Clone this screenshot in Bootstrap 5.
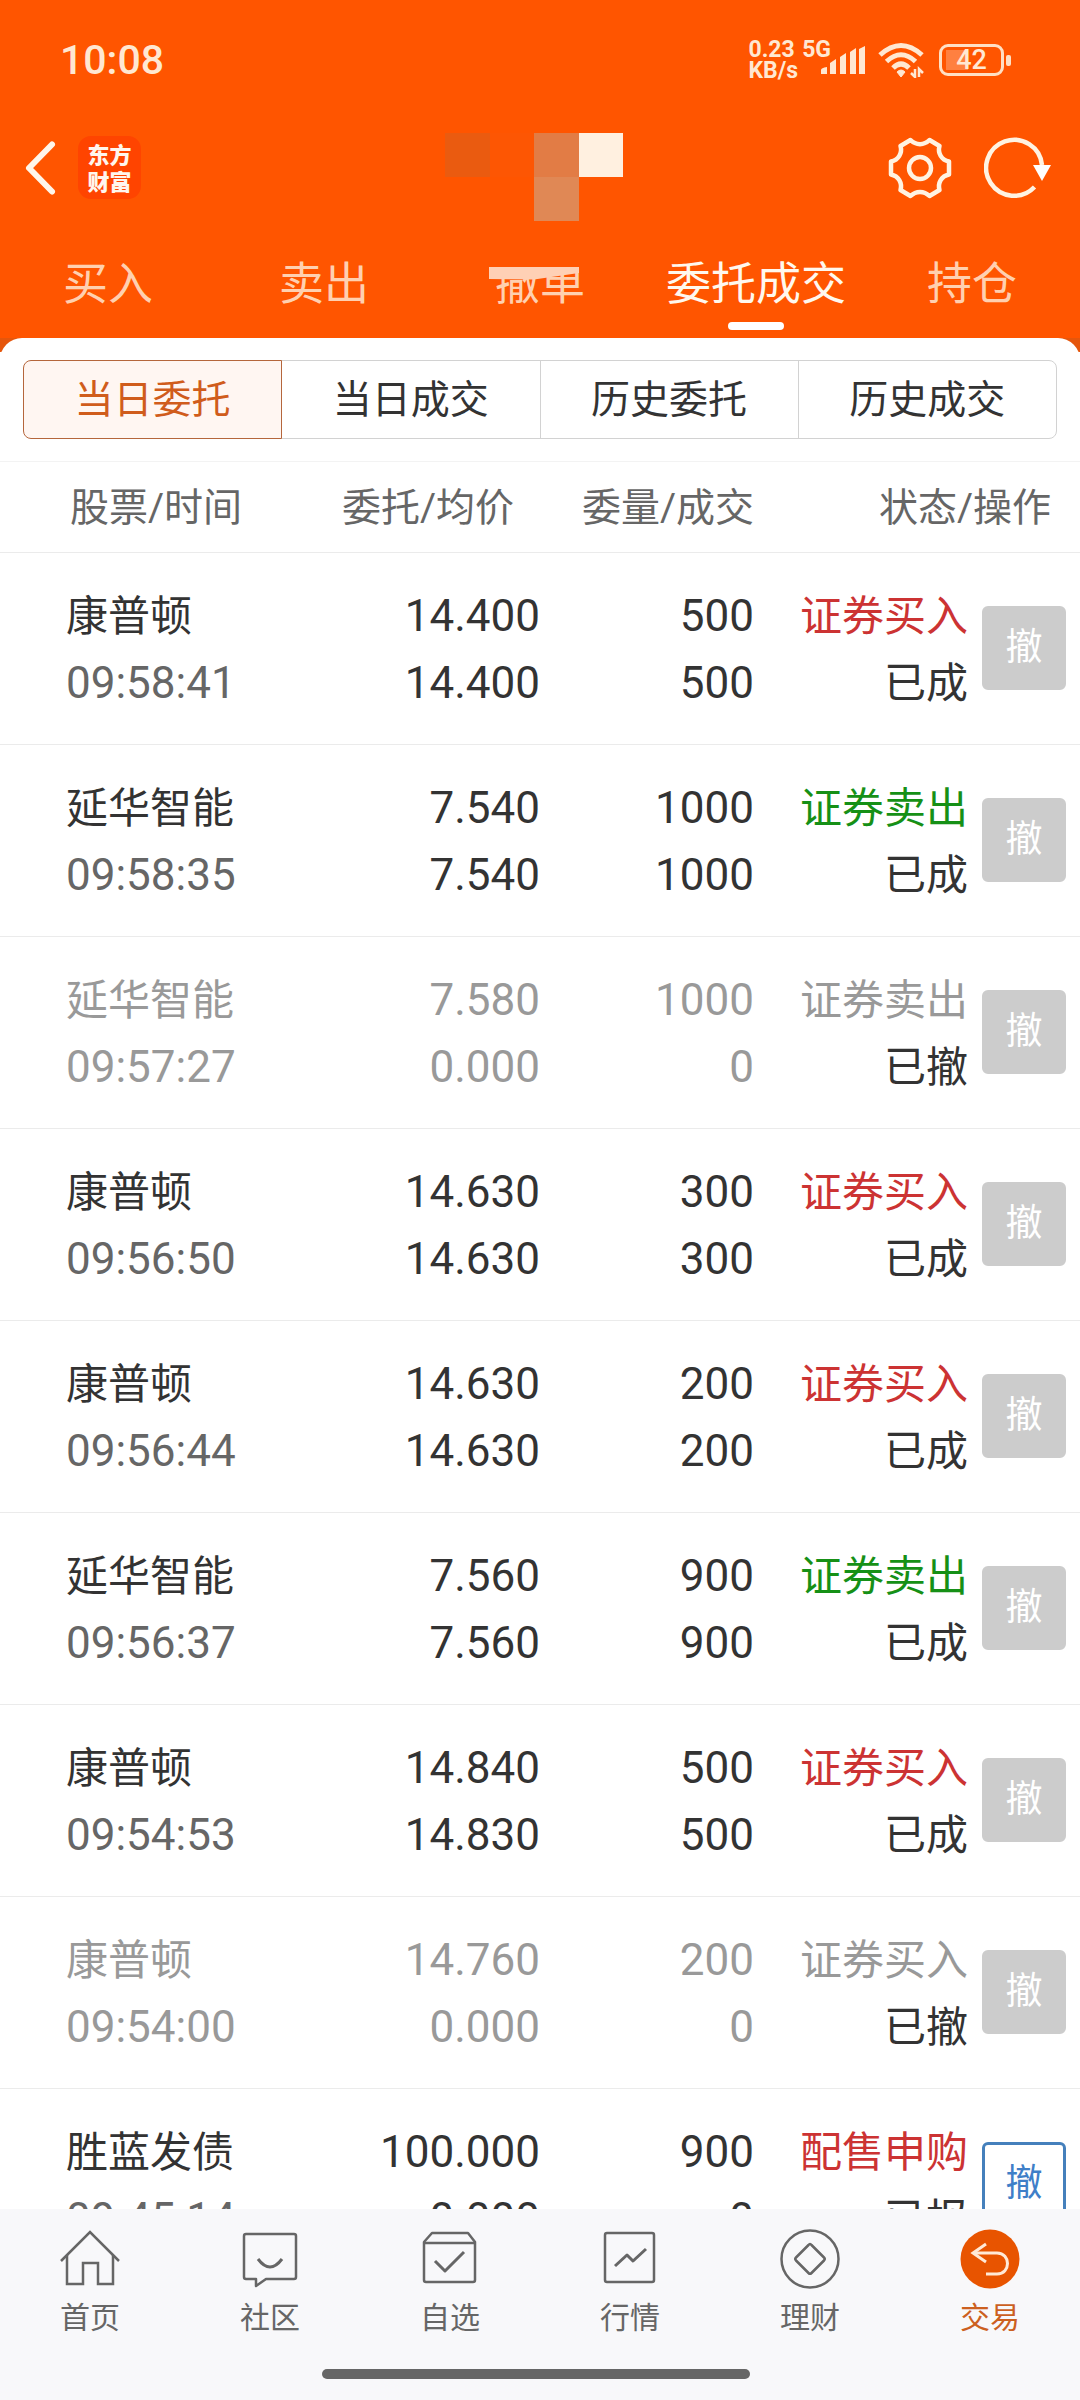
<!DOCTYPE html>
<html lang="zh-CN">
<head>
<meta charset="utf-8">
<meta name="viewport" content="width=device-width, initial-scale=1">
<title>委托成交</title>
<link href="https://cdn.jsdelivr.net/npm/bootstrap@5.3.0/dist/css/bootstrap.min.css" rel="stylesheet">
<style>
  body { font-family: Roboto, "Noto Sans CJK SC", sans-serif; color: #333; background: #fff; }
  svg { display: block; flex: none; }
  .top-area { background: #ff5500; }

  .status-row { height: 120px; padding: 0 69px 0 60px; color: #ffe8d2; }
  .clock { font-size: 41px; line-height: 48px; font-weight: 500; }
  .net-speed { font-size: 23px; line-height: 21px; font-weight: 700; margin-right: 4px; }
  .net-type { font-size: 23px; line-height: 21px; font-weight: 700; padding-bottom: 21px; }
  .signal-bars { margin-left: -11px; }
  .wifi-mark { margin: 0 14px 0 12px; }
  .battery-body { width: 65px; height: 32px; border: 3px solid #ffe0c4; border-radius: 9px; background: linear-gradient(#ff8040, #ff8040) 4px 3px / 22px 20px no-repeat; font-size: 27px; line-height: 27px; font-weight: 500; }
  .battery-tip { width: 5px; height: 11px; border-radius: 2px; background: #ffe0c4; margin-left: 2px; }

  .title-row { height: 110px; padding: 0 28px 0 24px; }
  .title-row .side-box { flex: 1 1 0; padding-top: 16px; }
  .account-mask { margin-top: 12px; }
  .brand { width: 63px; height: 63px; border-radius: 13px; background: #ff4400; color: #fff6ee; font: 900 22px/27px "Noto Sans CJK SC", sans-serif; padding-top: 4px; margin-left: 21px; }

  .main-tabs .nav-link { height: 108px; padding: 22px 0 0; font-size: 45px; line-height: 66px; color: #ffd0b0; border-radius: 0; background: none; white-space: nowrap; text-align: center; }
  .main-tabs .nav-link.active { color: #fff8ee; }
  .tab-mark { display: block; width: 56px; height: 8px; border-radius: 4px; background: #fff; margin: 4px auto 0; }
  .name-mask { top: 27px; left: 50%; margin-left: -51px; }

  .panel-back { background: linear-gradient(#e5560c 14px, #fff 14px); }
  .panel-top { background: #fff; border-radius: 22px 22px 0 0; padding: 22px 23px; border-bottom: 1px solid #f3f3f3; }
  .seg .btn { flex: 1 1 0; height: 79px; padding: 0; font-size: 39px; line-height: 78px; color: #333; border: 1px solid #d2d2d2; border-radius: 8px; }
  .seg .btn.active { color: #d05c1c; background: #fff6f2; border-color: #b5663c; z-index: 2; }

  .list-area { min-height: 0; overflow: auto; scrollbar-width: none; }
  .orders { table-layout: fixed; width: 100%; border-collapse: separate; border-spacing: 0; }
  .orders th, .orders td { padding: 2px 0 0; border-bottom: 1px solid #ebebeb; vertical-align: middle; white-space: nowrap; text-align: right; }
  .orders th { height: 91px; font-size: 39px; line-height: 60px; font-weight: 400; color: #666; }
  .orders td { height: 192px; font-size: 44px; line-height: 67px; }
  .orders td.first, .orders td.state { font-size: 42px; }
  .orders td:last-child { padding: 0 0 2px; }
  .orders .first { padding-left: 66px; text-align: left; }
  .orders th.first { padding-left: 70px; }
  .orders th.price { padding-right: 26px; }
  .orders th.state { padding-right: 29px; }
  .c-price { width: 258px; }
  .c-vol, .c-state { width: 214px; }
  .c-act { width: 112px; }
  .time-text { color: #666; font-size: 44px; }
  .buy { color: #cc3333; }
  .sell { color: #169016; }
  .voided td, .voided .time-text, .voided .side-text { color: #999; }
  .voided .state-text { color: #333; }
  .cancel-btn { display: block; width: 84px; height: 84px; padding: 0; margin-left: 14px; border: 3px solid #ccc; border-radius: 6px; font-size: 37px; line-height: 78px; }
  .cancel-btn:disabled { opacity: 1; color: #fff; background: #ccc; border-color: #ccc; }
  .cancel-btn.live { background: #fff; border-color: #4580bc; color: #3f7fc8; }

  .bottom-bar { background: #f8f8fa; padding-bottom: 21px; }
  .bottom-bar .nav-link { padding: 20px 0 0; color: #666; font-size: 30px; line-height: 44px; }
  .bottom-bar .nav-link svg { margin: 0 auto 7px; }
  .bottom-bar .nav-link.active { color: #cc601f; }
  .home-line { width: 428px; height: 10px; border-radius: 5px; background: #666; margin: 29px auto 0; }
</style>
</head>
<body>
<div class="d-flex flex-column vh-100">
  <header class="top-area">
    <div class="status-row d-flex align-items-center justify-content-between">
      <span class="clock">10:08</span>
      <div class="d-flex align-items-center">
        <div class="net-speed">0.23<br>KB/s</div>
        <div class="net-type">5G</div>
        <svg class="signal-bars" width="46" height="30" viewBox="0 0 46 30" fill="#ffe8d2"><path d="M1 29v-4q0-2 6-3v7zM10 29V18l6-4v15zM20 29V12l6-4v21zM30 29V7l6-4v26zM39 29V4l6-3v28z"/></svg>
        <svg class="wifi-mark" width="47" height="36" viewBox="0 0 47 36" fill="none" stroke="#ffe8d2" stroke-width="5"><path d="M2 13Q23 -6 44 13"/><path d="M8.500 19.500Q23 6 37.500 19.500"/><path d="M15 26Q23 18 31 26"/><path d="M23 35l-4-5q4-4 8 0z" fill="#ffe8d2" stroke-width="1"/><path d="M37 27v8l-4-4M41 35v-8l4 4" stroke-width="2.500"/></svg>
        <div class="battery-body text-center">42</div>
        <div class="battery-tip"></div>
      </div>
    </div>

    <div class="title-row d-flex align-items-start">
      <div class="side-box d-flex align-items-center">
        <a href="#" aria-label="返回"><svg width="33" height="56" viewBox="0 0 33 56" fill="none" stroke="#fff6ea" stroke-width="6" stroke-linecap="round" stroke-linejoin="round"><path d="M28 4.500L5 28L28 51.500"/></svg></a>
        <div class="brand text-center">东方<br>财富</div>
      </div>
      <svg class="account-mask" width="186" height="90" viewBox="0 0 186 90"><path fill="#ea5b10" d="M0 1h45v44H0z"/><path fill="#fd5603" d="M45 1h44v44H45z"/><path fill="#e27c45" d="M89 1h45v44H89z"/><path fill="#e08855" d="M89 45h45v44H89z"/><path fill="#fff0e0" d="M134 1h44v44h-44z"/></svg>
      <div class="side-box d-flex align-items-center justify-content-end">
        <a href="#" aria-label="设置"><svg width="64" height="64" viewBox="-32 -32 64 64" fill="none" stroke="#fff3e2" stroke-width="4.500" stroke-linejoin="round"><path d="M-9.500 -28C-4 -22.500 4 -22.500 9.500 -28L19.500 -22C17.500 -15 21.500 -8 29 -6.500V6.500C21.500 8 17.500 15 19.500 22L9.500 28C4 22.500 -4 22.500 -9.500 28L-19.500 22C-17.500 15 -21.500 8 -29 6.500V-6.500C-21.500 -8 -17.500 -15 -19.500 -22Z"/><circle r="11"/></svg></a>
        <a href="#" aria-label="刷新" class="ms-4 ps-2"><svg width="68" height="64" viewBox="-30 -32 68 64" fill="none" stroke="#fff3e2" stroke-width="4.500"><path d="M20.500 19A28 28 0 1 1 28 -3"/><path d="M19 -3H37L28 13Z" fill="#fff" stroke="none"/></svg></a>
      </div>
    </div>

    <nav class="main-tabs row g-0" aria-label="交易">
      <div class="col"><a class="nav-link" href="#">买入</a></div>
      <div class="col"><a class="nav-link" href="#">卖出</a></div>
      <div class="col position-relative"><a class="nav-link" href="#">撤单</a>
        <svg class="name-mask position-absolute" width="90" height="23" viewBox="0 0 90 23"><path fill="#ff5500" d="M0 0h90v10H0z"/><path fill="#ffd0b5" d="M0 10h90v6l-45 6.500L0 22z"/></svg>
      </div>
      <div class="col"><a class="nav-link active" href="#" aria-current="page">委托成交<span class="tab-mark"></span></a></div>
      <div class="col"><a class="nav-link" href="#">持仓</a></div>
    </nav>
  </header>

  <div class="panel-back">
    <div class="panel-top">
      <div class="seg btn-group d-flex" role="group" aria-label="查询范围">
        <button type="button" class="btn active">当日委托</button>
        <button type="button" class="btn">当日成交</button>
        <button type="button" class="btn">历史委托</button>
        <button type="button" class="btn">历史成交</button>
      </div>
    </div>
  </div>

  <main class="list-area flex-grow-1">
    <table class="orders">
      <colgroup><col><col class="c-price"><col class="c-vol"><col class="c-state"><col class="c-act"></colgroup>
      <thead>
        <tr><th class="first" scope="col">股票/时间</th><th class="price" scope="col">委托/均价</th><th scope="col">委量/成交</th><th class="state" colspan="2" scope="col">状态/操作</th></tr>
      </thead>
      <tbody>
        <tr><td class="first">康普顿<br><span class="time-text">09:58:41</span></td><td>14.400<br>14.400</td><td>500<br>500</td><td class="state"><span class="side-text buy">证券买入</span><br><span class="state-text">已成</span></td><td><button type="button" class="btn cancel-btn" disabled>撤</button></td></tr>
        <tr><td class="first">延华智能<br><span class="time-text">09:58:35</span></td><td>7.540<br>7.540</td><td>1000<br>1000</td><td class="state"><span class="side-text sell">证券卖出</span><br><span class="state-text">已成</span></td><td><button type="button" class="btn cancel-btn" disabled>撤</button></td></tr>
        <tr class="voided"><td class="first">延华智能<br><span class="time-text">09:57:27</span></td><td>7.580<br>0.000</td><td>1000<br>0</td><td class="state"><span class="side-text">证券卖出</span><br><span class="state-text">已撤</span></td><td><button type="button" class="btn cancel-btn" disabled>撤</button></td></tr>
        <tr><td class="first">康普顿<br><span class="time-text">09:56:50</span></td><td>14.630<br>14.630</td><td>300<br>300</td><td class="state"><span class="side-text buy">证券买入</span><br><span class="state-text">已成</span></td><td><button type="button" class="btn cancel-btn" disabled>撤</button></td></tr>
        <tr><td class="first">康普顿<br><span class="time-text">09:56:44</span></td><td>14.630<br>14.630</td><td>200<br>200</td><td class="state"><span class="side-text buy">证券买入</span><br><span class="state-text">已成</span></td><td><button type="button" class="btn cancel-btn" disabled>撤</button></td></tr>
        <tr><td class="first">延华智能<br><span class="time-text">09:56:37</span></td><td>7.560<br>7.560</td><td>900<br>900</td><td class="state"><span class="side-text sell">证券卖出</span><br><span class="state-text">已成</span></td><td><button type="button" class="btn cancel-btn" disabled>撤</button></td></tr>
        <tr><td class="first">康普顿<br><span class="time-text">09:54:53</span></td><td>14.840<br>14.830</td><td>500<br>500</td><td class="state"><span class="side-text buy">证券买入</span><br><span class="state-text">已成</span></td><td><button type="button" class="btn cancel-btn" disabled>撤</button></td></tr>
        <tr class="voided"><td class="first">康普顿<br><span class="time-text">09:54:00</span></td><td>14.760<br>0.000</td><td>200<br>0</td><td class="state"><span class="side-text">证券买入</span><br><span class="state-text">已撤</span></td><td><button type="button" class="btn cancel-btn" disabled>撤</button></td></tr>
        <tr><td class="first">胜蓝发债<br><span class="time-text">09:45:14</span></td><td>100.000<br>0.000</td><td>900<br>0</td><td class="state"><span class="side-text buy">配售申购</span><br><span class="state-text">已报</span></td><td><button type="button" class="btn cancel-btn live">撤</button></td></tr>
      </tbody>
    </table>
  </main>

  <footer class="bottom-bar">
    <nav class="nav d-flex text-center" aria-label="主导航">
      <a class="nav-link col" href="#"><svg width="60" height="60" viewBox="0 0 60 60" fill="none" stroke="#666" stroke-width="2.500"><path d="M1 32L30 3L59 32"/><path d="M7 26V55H23V34H38V55H53V26"/></svg>首页</a>
      <a class="nav-link col" href="#"><svg width="60" height="60" viewBox="0 0 60 60" fill="none" stroke="#666" stroke-width="2.500" stroke-linejoin="round"><path d="M6 5H54Q56 5 56 7V48Q56 50 54 50H26L16 57V50H6Q4 50 4 48V7Q4 5 6 5Z"/><path d="M18 30Q30 46 42 30" stroke-width="3"/></svg>社区</a>
      <a class="nav-link col" href="#"><svg width="60" height="60" viewBox="0 0 60 60" fill="none" stroke="#666" stroke-width="2.500" stroke-linejoin="round"><path d="M4 13L12 4H48L55 13V51Q55 53 53 53H6Q4 53 4 51Z"/><path d="M4 14H55"/><path d="M15 32L25 42L44 23" stroke-width="3"/></svg>自选</a>
      <a class="nav-link col" href="#"><svg width="60" height="60" viewBox="0 0 60 60" fill="none" stroke="#666" stroke-width="2.500" stroke-linejoin="round"><rect x="5" y="4" width="49" height="49" rx="2"/><path d="M15 37L27 26L33 32L46 20" stroke-width="3"/></svg>行情</a>
      <a class="nav-link col" href="#"><svg width="60" height="60" viewBox="0 0 60 60" fill="none" stroke="#666" stroke-width="2.500" stroke-linejoin="round"><circle cx="30" cy="30" r="28.500"/><path d="M28.500 16Q30 14 31.500 16L44 28.500Q45.500 30 44 31.500L31.500 44Q30 45.500 28.500 44L16 31.500Q14.500 30 16 28.500Z" stroke-width="2.500"/></svg>理财</a>
      <a class="nav-link col active" href="#" aria-current="page"><svg width="60" height="60" viewBox="0 0 60 60" fill="none" stroke="#ffe9d6" stroke-width="3"><circle cx="30" cy="30" r="29.500" fill="#e85400" stroke="none"/><path d="M26 15L13 24L26 33"/><path d="M14 24H37C51 24 51 45 37 45H26"/></svg>交易</a>
    </nav>
    <div class="pe-2"><div class="home-line"></div></div>
  </footer>
</div>
<script src="https://cdn.jsdelivr.net/npm/bootstrap@5.3.0/dist/js/bootstrap.bundle.min.js"></script>
</body>
</html>
